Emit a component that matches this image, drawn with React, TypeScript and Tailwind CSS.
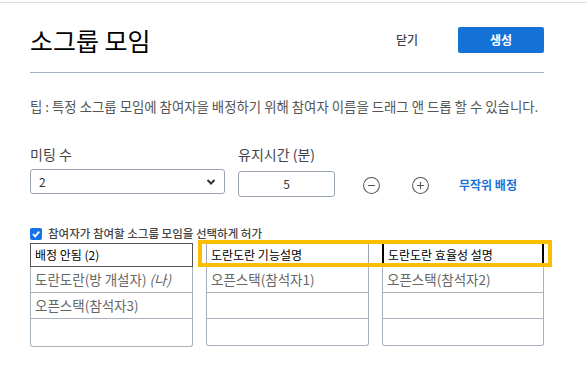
import { CircleMinus, CirclePlus } from "lucide-react";

const font = { fontFamily: '"Noto Sans CJK KR", "Noto Sans", sans-serif' };

function Column({
  header,
  rows,
  focused,
}: {
  header: string;
  rows: React.ReactNode[];
  focused?: boolean;
}) {
  return (
    <div className="flex flex-col">
      <div
        className={
          focused
            ? "h-[24px] border-y border-[#9aa5b1] border-x-2 border-x-black flex items-center px-[4px] text-[12px] text-black"
            : "h-[24px] border border-[#9aa5b1] flex items-center px-[4px] text-[12px] text-black"
        }
      >
        {header}
      </div>
      <div className="border border-t-0 border-[#a7b2bd] rounded-b-[3px]">
        {[0, 1, 2].map((i) => (
          <div
            key={i}
            className={
              i < 2
                ? "h-[26px] border-b border-[#a7b2bd] flex items-center px-[4px] text-[13.5px] text-[#666]"
                : "h-[26px] flex items-center px-[4px] text-[13.5px] text-[#666]"
            }
          >
            {rows[i]}
          </div>
        ))}
      </div>
    </div>
  );
}

export default function App() {
  return (
    <div className="w-[587px] h-[380px] bg-white relative overflow-hidden" style={font}>
      <div className="mt-[2px] h-px bg-[#dcdcdc]" />
      <div className="px-[30px]">
        <div className="mt-[24px] h-[26px] flex items-center w-[514px]">
          <h1 className="text-[25px] text-black leading-none">소그룹 모임</h1>
          <span className="ml-auto text-[12px] text-[#444] font-medium">닫기</span>
          <button className="ml-[40px] w-[86px] h-[26px] bg-[#1472d6] rounded-[2px] text-white text-[12px] font-bold">
            생성
          </button>
        </div>
        <div className="mt-[19px] h-px w-[514px] bg-[#a3b0bd]" />
        <p className="mt-[25px] text-[13.4px] text-[#555] leading-[16px] whitespace-nowrap">
          팁 : 특정 소그룹 모임에 참여자을 배정하기 위해 참여자 이름을 드래그 앤 드롭 할 수 있습니다.
        </p>
        <div className="mt-[32px] flex items-start">
          <div className="w-[195px]">
            <div className="text-[14px] text-[#444] leading-[16px]">미팅 수</div>
            <div className="mt-[7px] h-[25px] border border-[#9aa5b1] rounded-[3px] flex items-center px-[8px] text-[12px] text-[#333]">
              2
              <svg className="ml-auto" width="10" height="8" viewBox="0 0 10 8">
                <path d="M1.5 2 L5 5.5 L8.5 2" stroke="#333" strokeWidth="2" fill="none" />
              </svg>
            </div>
          </div>
          <div className="ml-[13px] w-[97px]">
            <div className="text-[14px] text-[#444] leading-[16px]">유지시간 (분)</div>
            <div className="mt-[9px] h-[26px] border border-[#9aa5b1] rounded-[3px] flex items-center justify-center text-[12px] text-[#333]">
              5
            </div>
          </div>
          <div className="mt-[26px] ml-[27px] flex items-center h-[26px]">
            <CircleMinus size={19} strokeWidth={1.3} color="#555" />
            <CirclePlus size={19} strokeWidth={1.3} color="#555" className="ml-[30px]" />
            <span className="ml-[29px] text-[12px] font-bold text-[#1a73d6]">무작위 배정</span>
          </div>
        </div>
        <label className="mt-[30px] flex items-center gap-[6px] h-[12px]">
          <span className="w-[12px] h-[12px] rounded-[2px] bg-[#1473e6] flex items-center justify-center">
            <svg width="10" height="10" viewBox="0 0 10 10">
              <path d="M2 5.2 L4.2 7.4 L8.2 2.6" stroke="white" strokeWidth="1.8" fill="none" />
            </svg>
          </span>
          <span className="text-[11.5px] text-[#444] font-medium">참여자가 참여할 소그룹 모임을 선택하게 허가</span>
        </label>
        <div className="mt-[3px] grid grid-cols-[163px_163px_162px] gap-x-[13px] w-[514px]">
          <div className="flex flex-col">
            <div className="h-[24px] border border-[#555] flex items-center px-[4px] text-[12px] text-black">
              배정 안됨 (2)
            </div>
            <div className="border border-t-0 border-[#a7b2bd] rounded-b-[3px]">
              <div className="h-[26px] border-b border-[#a7b2bd] flex items-center px-[4px] text-[13.5px] text-[#666]">
                도란도란(방 개설자)&nbsp;<i>(나)</i>
              </div>
              <div className="h-[26px] border-b border-[#a7b2bd] flex items-center px-[4px] text-[13.5px] text-[#666]">
                오픈스택(참석자3)
              </div>
              <div className="h-[27px]" />
            </div>
          </div>
          <Column header="도란도란 기능설명" rows={["오픈스택(참석자1)", "", ""]} />
          <Column header="도란도란 효율성 설명" rows={["오픈스택(참석자2)", "", ""]} focused />
        </div>
      </div>
      <div className="absolute left-[198px] top-[240px] w-[354px] h-[27px] border-[4px] border-[#fcbf00] pointer-events-none" />
    </div>
  );
}
